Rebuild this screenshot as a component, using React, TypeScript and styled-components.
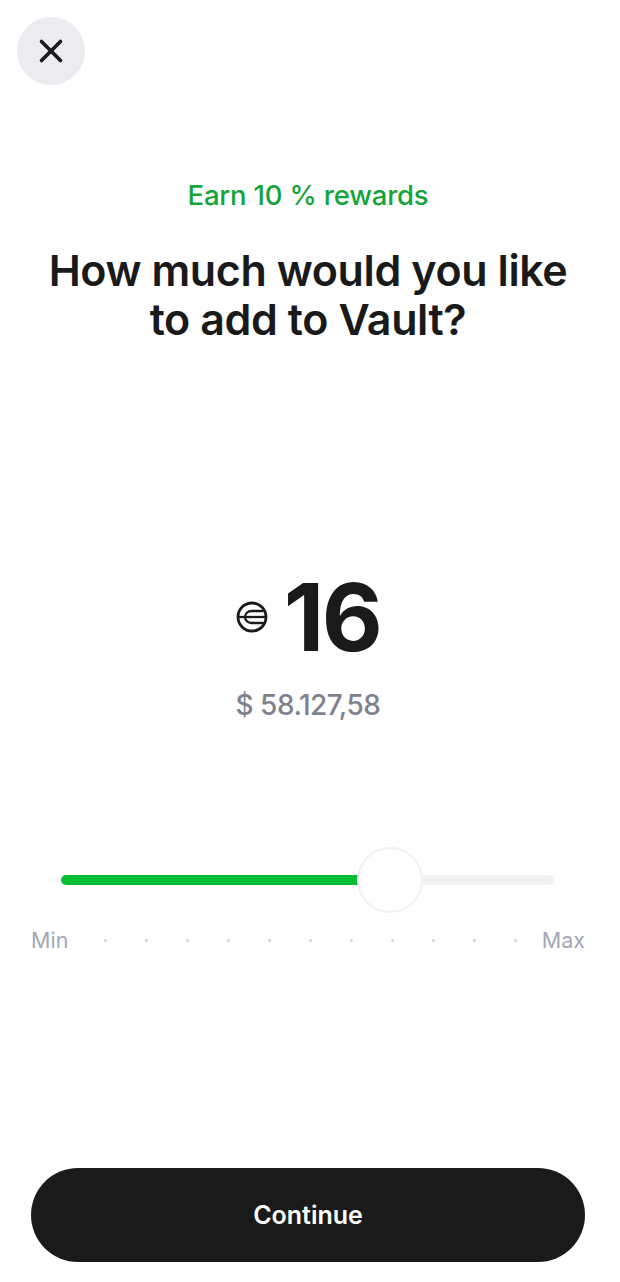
import React from 'react';
import styled, { createGlobalStyle } from 'styled-components';
import { X } from 'lucide-react';

const GlobalStyle = createGlobalStyle`
  html, body {
    margin: 0;
    padding: 0;
    background: #fff;
  }
  * {
    box-sizing: border-box;
  }
`;

const Page = styled.div`
  width: 620px;
  height: 1282px;
  display: flex;
  flex-direction: column;
  font-family: 'Inter', 'Liberation Sans', sans-serif;
  color: #1a1a1a;
  background: #fff;
`;

const TopBar = styled.div`
  padding: 17px 0 0 17px;
  height: 175px;
`;

const CloseButton = styled.button`
  width: 68px;
  height: 68px;
  padding: 0;
  border: none;
  border-radius: 50%;
  background: #ebebf0;
  color: #1a1a1a;
  display: flex;
  align-items: center;
  justify-content: center;
`;

const Header = styled.div`
  padding-right: 4px;
  display: flex;
  flex-direction: column;
  align-items: center;
  text-align: center;
`;

const Rewards = styled.div`
  height: 40px;
  line-height: 40px;
  font-size: 27.5px;
  font-weight: 500;
  letter-spacing: -0.2px;
  color: #14a53a;
`;

const Title = styled.h1`
  margin: 31px 0 0;
  font-size: 43px;
  line-height: 49px;
  font-weight: 600;
  letter-spacing: -0.4px;
`;

const Amount = styled.div`
  margin-top: 223px;
  padding-right: 4px;
  display: flex;
  flex-direction: column;
  align-items: center;
`;

const AmountRow = styled.div`
  display: flex;
  align-items: center;
  justify-content: center;
  gap: 16px;
  height: 100px;
`;

const AmountValue = styled.div`
  font-size: 94px;
  line-height: 100px;
  font-weight: 700;
  letter-spacing: -2.5px;
`;

const Fiat = styled.div`
  margin-top: 18px;
  height: 40px;
  line-height: 40px;
  font-size: 28px;
  font-weight: 500;
  letter-spacing: -0.5px;
  color: #7d828e;
`;

const SliderBlock = styled.div`
  margin-top: 122px;
  padding: 0 35px 0 31px;
  display: flex;
  flex-direction: column;
`;

const TrackArea = styled.div`
  height: 66px;
  padding: 0 30px;
  display: flex;
  align-items: center;
`;

const Track = styled.div`
  position: relative;
  width: 100%;
  height: 10px;
  border-radius: 5px;
  background: #f2f2f3;
`;

const Fill = styled.div`
  height: 100%;
  border-radius: 5px 0 0 5px;
  background: #06bf34;
`;

const Thumb = styled.div`
  position: absolute;
  top: 50%;
  width: 66px;
  height: 66px;
  border-radius: 50%;
  background: #fff;
  border: 2px solid #f2f1f2;
  transform: translate(-50%, -50%);
`;

const Scale = styled.div`
  margin-top: 12px;
  display: flex;
  align-items: center;
  justify-content: space-between;
  height: 30px;
  font-size: 21.5px;
  color: #a3a8b5;
`;

const Ticks = styled.div`
  flex: 1;
  padding: 0 25px 0 36px;
  display: flex;
  justify-content: space-between;
`;

const Tick = styled.span`
  width: 3px;
  height: 3px;
  border-radius: 50%;
  background: #cfd1d6;
`;

const Footer = styled.div`
  margin-top: auto;
  padding: 0 35px 20px 31px;
`;

const ContinueButton = styled.button`
  width: 100%;
  height: 94px;
  border: none;
  border-radius: 47px;
  background: #1a1a1a;
  color: #fff;
  font-family: inherit;
  font-size: 25px;
  font-weight: 600;
`;

const TokenIcon = () => (
  <svg width="32" height="32" viewBox="0 0 32 32" fill="none" stroke="#1a1a1a">
    <circle cx="16" cy="16" r="14" strokeWidth="2.8" />
    <path d="M3 16H29" strokeWidth="2.3" />
    <path d="M27.5 10H15.5C12 10 9 12.7 9 16C9 19.3 12 22 15.5 22H27.5" strokeWidth="2.3" />
  </svg>
);

const TICK_COUNT = 11;
const SLIDER_PERCENT = 66.6;

const App: React.FC = () => {
  return (
    <Page>
      <GlobalStyle />
      <TopBar>
        <CloseButton aria-label="Close">
          <X size={38} strokeWidth={2.3} />
        </CloseButton>
      </TopBar>

      <Header>
        <Rewards>Earn 10 % rewards</Rewards>
        <Title>
          How much would you like
          <br />
          to add to Vault?
        </Title>
      </Header>

      <Amount>
        <AmountRow>
          <TokenIcon />
          <AmountValue>16</AmountValue>
        </AmountRow>
        <Fiat>$ 58.127,58</Fiat>
      </Amount>

      <SliderBlock>
        <TrackArea>
          <Track>
            <Fill style={{ width: `${SLIDER_PERCENT - 6}%` }} />
            <Thumb style={{ left: `${SLIDER_PERCENT}%` }} />
          </Track>
        </TrackArea>
        <Scale>
          <span>Min</span>
          <Ticks>
            {Array.from({ length: TICK_COUNT }).map((_, i) => (
              <Tick key={i} />
            ))}
          </Ticks>
          <span>Max</span>
        </Scale>
      </SliderBlock>

      <Footer>
        <ContinueButton>Continue</ContinueButton>
      </Footer>
    </Page>
  );
};

export default App;
